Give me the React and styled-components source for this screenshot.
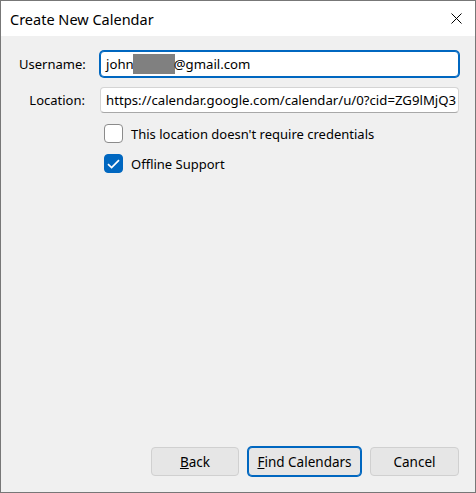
import React from "react"
import styled, { createGlobalStyle } from "styled-components"

const GlobalStyle = createGlobalStyle`
  html, body {
    margin: 0;
    padding: 0;
    background: #f0f0f0;
  }
  * {
    box-sizing: border-box;
  }
`

const Window = styled.div`
  width: 476px;
  height: 493px;
  display: flex;
  flex-direction: column;
  border: 1px solid #777777;
  background: #f0f0f0;
  font-family: "Noto Sans", "Open Sans", sans-serif;
  font-size: 13px;
  color: #000;
`

const TitleBar = styled.div`
  height: 35px;
  flex-shrink: 0;
  display: flex;
  align-items: center;
  justify-content: space-between;
  padding: 0 13px 0 9px;
  background: #ffffff;
`

const Title = styled.div`
  font-size: 14.5px;
  color: #000;
`

const Body = styled.div`
  flex: 1;
  display: flex;
  flex-direction: column;
  padding: 15px 16px 16px 18px;
`

const Form = styled.div`
  display: grid;
  grid-template-columns: 66px 1fr;
  column-gap: 15px;
  row-gap: 10px;
  align-items: center;
`

const Label = styled.label`
  text-align: right;
`

const Field = styled.div`
  height: 26px;
  display: flex;
  align-items: center;
  padding: 0 5px;
  background: #fff;
  border: 1px solid ${p => (p.$focused ? "#0067c0" : "#d4d4d4")};
  border-bottom-color: ${p => (p.$focused ? "#0067c0" : "#a8a8a8")};
  border-radius: 4px;
  box-shadow: ${p => (p.$focused ? "0 0 0 1px #0067c0" : "none")};
  overflow: hidden;
  white-space: nowrap;
  font-size: 13.2px;
`

const Redacted = styled.span`
  display: inline-block;
  width: 42px;
  height: 20px;
  background: #808080;
  vertical-align: middle;
  margin: 0 -1px;
`

const Options = styled.div`
  display: flex;
  flex-direction: column;
  gap: 11px;
  padding: 11px 0 0 85px;
`

const CheckRow = styled.div`
  display: flex;
  align-items: center;
  gap: 8px;
  height: 19px;
`

const Box = styled.span`
  width: 19px;
  height: 19px;
  border-radius: 4px;
  display: flex;
  align-items: center;
  justify-content: center;
  background: ${p => (p.$checked ? "#0067c0" : "#ffffff")};
  border: 1px solid ${p => (p.$checked ? "#0067c0" : "#8b8b8b")};
`

const Spacer = styled.div`
  flex: 1;
`

const Buttons = styled.div`
  display: flex;
  justify-content: flex-end;
  gap: 9px;
`

const Button = styled.button`
  height: 29px;
  width: ${p => p.$w}px;
  font-family: inherit;
  font-size: 13.5px;
  color: #000;
  background: #e6e6e6;
  border: 1px solid ${p => (p.$focused ? "#0067c0" : "#d0d0d0")};
  box-shadow: ${p => (p.$focused ? "0 0 0 1px #0067c0" : "none")};
  border-radius: 4px;
  padding: 0;
`

const CloseIcon = () => (
  <svg width="11" height="11" viewBox="0 0 11 11">
    <path d="M0.5 0.5 L10.5 10.5 M10.5 0.5 L0.5 10.5" stroke="#000" strokeWidth="1" />
  </svg>
)

const Check = () => (
  <svg width="13" height="10" viewBox="0 0 13 10">
    <path d="M1 5.2 L4.6 8.6 L12 1.2" stroke="#fff" strokeWidth="1.7" fill="none" />
  </svg>
)

const App = () => {
  return (
    <>
      <GlobalStyle />
      <Window>
        <TitleBar>
          <Title>Create New Calendar</Title>
          <CloseIcon />
        </TitleBar>
        <Body>
          <Form>
            <Label>Username:</Label>
            <Field $focused>
              john<Redacted />@gmail.com
            </Field>
            <Label>Location:</Label>
            <Field>https://calendar.google.com/calendar/u/0?cid=ZG9lMjQ3</Field>
          </Form>
          <Options>
            <CheckRow>
              <Box />
              <span>This location doesn't require credentials</span>
            </CheckRow>
            <CheckRow>
              <Box $checked>
                <Check />
              </Box>
              <span>Offline Support</span>
            </CheckRow>
          </Options>
          <Spacer />
          <Buttons>
            <Button $w={88}>
              <u>B</u>ack
            </Button>
            <Button $w={113} $focused>
              <u>F</u>ind Calendars
            </Button>
            <Button $w={89}>Cancel</Button>
          </Buttons>
        </Body>
      </Window>
    </>
  )
}

export default App
